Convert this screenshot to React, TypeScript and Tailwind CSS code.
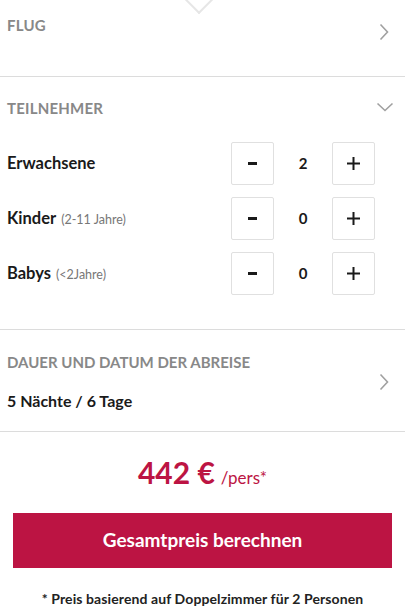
import React from "react";

const ChevronRight = () => (
  <svg width="10" height="18" viewBox="0 0 10 18" className="block">
    <polyline points="1.5,1.5 8.5,9 1.5,16.5" fill="none" stroke="#a0a0a0" strokeWidth="1.6" />
  </svg>
);

const ChevronDown = () => (
  <svg width="18" height="10" viewBox="0 0 18 10" className="block">
    <polyline points="1.5,1.5 9,8.5 16.5,1.5" fill="none" stroke="#a0a0a0" strokeWidth="1.6" />
  </svg>
);

const Stepper = ({ value }: { value: number }) => (
  <div className="flex items-center">
    <button className="flex h-[43px] w-[43px] items-center justify-center rounded-[2px] border border-[#e0e0e0] bg-white">
      <span className="block h-[3px] w-[9px] bg-[#1a1a1a]" />
    </button>
    <div className="w-[58px] text-center text-[15px] font-bold text-[#1a1a1a]">{value}</div>
    <button className="flex h-[43px] w-[43px] items-center justify-center rounded-[2px] border border-[#e0e0e0] bg-white">
      <svg width="13" height="13" viewBox="0 0 13 13">
        <rect x="5.5" y="0" width="2" height="13" fill="#1a1a1a" />
        <rect x="0" y="5.5" width="13" height="2" fill="#1a1a1a" />
      </svg>
    </button>
  </div>
);

const Row = ({ label, sub, value }: { label: string; sub?: string; value: number }) => (
  <div className="flex h-[43px] items-center justify-between">
    <div className="flex items-baseline">
      <span className="text-[16.5px] font-bold text-[#1a1a1a]">{label}</span>
      {sub && <span className="ml-[5px] text-[12.5px] text-[#777]">{sub}</span>}
    </div>
    <Stepper value={value} />
  </div>
);

export default function App() {
  return (
    <div className="w-[405px] bg-white" style={{ fontFamily: "Lato, 'Noto Sans', sans-serif" }}>
      {/* Flug */}
      <div className="relative h-[77px] overflow-hidden border-b border-[#dcdcdc]">
        <div className="absolute left-[189px] top-[-10px] h-[20px] w-[20px] rotate-45 border-b-2 border-r-2 border-[#e6e6e6] bg-white" />
        <div className="flex items-start justify-between pl-[7px] pr-[16px] pt-[15px]">
          <span className="text-[15px] font-bold leading-[20px] tracking-[0.2px] text-[#888]">FLUG</span>
          <div className="mt-[8px]">
            <ChevronRight />
          </div>
        </div>
      </div>

      {/* Teilnehmer */}
      <div className="border-b border-[#dcdcdc] pb-[34px] pl-[7px] pt-[21px]">
        <div className="flex items-start justify-between pr-[11px]">
          <span className="text-[15px] font-bold leading-[20px] tracking-[0.2px] text-[#888]">TEILNEHMER</span>
          <div className="mt-[4px]">
            <ChevronDown />
          </div>
        </div>
        <div className="mt-[24px] flex flex-col gap-[12px] pr-[30px]">
          <Row label="Erwachsene" value={2} />
          <Row label="Kinder" sub="(2-11 Jahre)" value={0} />
          <Row label="Babys" sub="(<2Jahre)" value={0} />
        </div>
      </div>

      {/* Dauer */}
      <div className="flex items-center justify-between border-b border-[#dcdcdc] pb-[20px] pl-[7px] pr-[16px] pt-[22px]">
        <div>
          <div className="text-[15px] font-bold leading-[20px] text-[#888]">DAUER UND DATUM DER ABREISE</div>
          <div className="mt-[19px] text-[16px] font-bold leading-[20px] text-[#1a1a1a]">5 Nächte / 6 Tage</div>
        </div>
        <ChevronRight />
      </div>

      {/* Price */}
      <div className="pt-[22px] text-center">
        <span className="text-[30px] font-bold leading-[36px] text-[#bc1443]">442 €</span>
        <span className="ml-[6px] text-[17px] leading-[36px] text-[#bc1443]">/pers*</span>
      </div>

      <div className="mx-[13px] mt-[17px] flex h-[55px] items-center justify-center bg-[#bc1443]">
        <span className="text-[19px] font-bold text-white">Gesamtpreis berechnen</span>
      </div>

      <div className="mt-[21px] pb-[8px] text-center text-[14px] font-bold leading-[20px] tracking-[0.1px] text-[#222]">
        * Preis basierend auf Doppelzimmer für 2 Personen
      </div>
    </div>
  );
}
